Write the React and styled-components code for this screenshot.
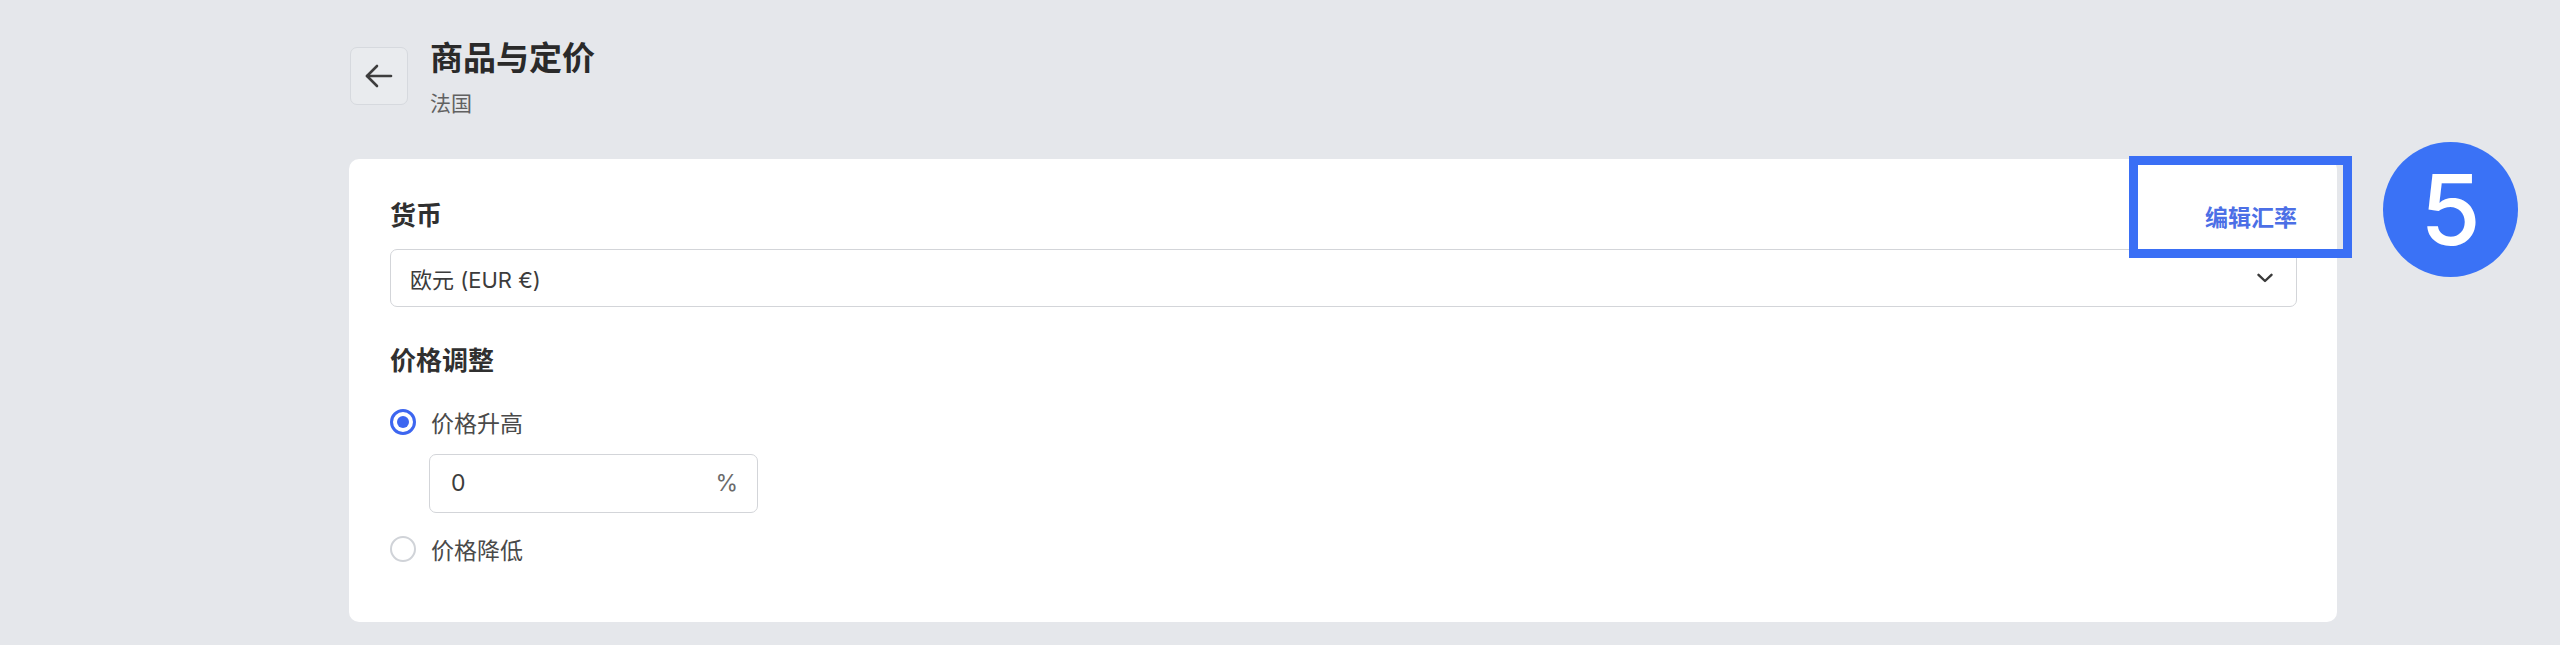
import React from 'react';
import styled, { createGlobalStyle } from 'styled-components';

const GlobalStyle = createGlobalStyle`
  html, body {
    margin: 0;
    padding: 0;
    background: #e5e7eb;
  }
  body {
    font-family: "Inter", "Noto Sans CJK SC", sans-serif;
    color: #303030;
  }
`;

const Page = styled.div`
  width: 2560px;
  height: 645px;
  box-sizing: border-box;
  padding: 38px 0 0 349px;
  background: #e5e7eb;
`;

const Header = styled.div`
  display: flex;
  align-items: flex-start;
  gap: 22px;
  margin-left: 1px;
`;

const BackButton = styled.button`
  display: flex;
  align-items: center;
  justify-content: center;
  width: 58px;
  height: 58px;
  margin-top: 9px;
  padding: 0;
  border: 1px solid #d6d9de;
  border-radius: 7px;
  background: #e9ebee;
  color: #3d3d3d;
`;

const TitleBlock = styled.div`
  display: flex;
  flex-direction: column;
  gap: 11px;
`;

const Title = styled.h1`
  margin: 0;
  font-size: 33px;
  line-height: 40px;
  font-weight: 700;
  color: #2a2a2a;
`;

const Subtitle = styled.div`
  font-size: 21px;
  line-height: 30px;
  color: #616161;
`;

const Card = styled.section`
  position: relative;
  width: 1988px;
  box-sizing: border-box;
  margin-top: 40px;
  padding: 39px 40px 56px 41px;
  background: #ffffff;
  border-radius: 10px;
  display: flex;
  flex-direction: column;
`;

const LabelRow = styled.div`
  display: flex;
  align-items: center;
  justify-content: space-between;
  height: 36px;
`;

const Label = styled.div`
  font-size: 26px;
  line-height: 36px;
  font-weight: 600;
  color: #303030;
  margin-top: ${p => p.$top || 0}px;
`;

const Link = styled.a`
  font-size: 23px;
  font-weight: 600;
  color: #4c6fe6;
  text-decoration: none;
`;

const Select = styled.div`
  display: flex;
  align-items: center;
  justify-content: space-between;
  height: 58px;
  box-sizing: border-box;
  margin-top: 15px;
  padding: 0 23px 0 19px;
  border: 1px solid #d3d5d9;
  border-radius: 7px;
  font-size: 22px;
  color: #3c3c3c;
`;

const RadioRow = styled.label`
  display: flex;
  align-items: center;
  gap: 15px;
  height: 34px;
  margin-top: ${p => p.$top}px;
  font-size: 23px;
  color: #4a4a4a;
`;

const RadioDot = styled.span`
  width: 26px;
  height: 26px;
  box-sizing: border-box;
  border-radius: 50%;
  border: ${p => (p.$checked ? '3px solid #3d66f0' : '2px solid #d0d3d8')};
  display: flex;
  align-items: center;
  justify-content: center;
  &::after {
    content: '';
    display: ${p => (p.$checked ? 'block' : 'none')};
    width: 12px;
    height: 12px;
    border-radius: 50%;
    background: #3d66f0;
  }
`;

const PercentInput = styled.div`
  display: flex;
  align-items: center;
  justify-content: space-between;
  width: 329px;
  height: 59px;
  box-sizing: border-box;
  margin: 15px 0 0 39px;
  padding: 0 19px 2px 21px;
  border: 1px solid #d3d5d9;
  border-radius: 7px;
  font-size: 23px;
  color: #3c3c3c;
`;

const Unit = styled.span`
  color: #6b6b6b;
`;

const Highlight = styled.div`
  position: absolute;
  left: 1780px;
  top: -3px;
  width: 223px;
  height: 102px;
  box-sizing: border-box;
  border: 9px solid #3a6ff5;
`;

const StepBadge = styled.div`
  position: absolute;
  left: 2034px;
  top: -17px;
  width: 135px;
  height: 135px;
  border-radius: 50%;
  background: #3a72f6;
  color: #ffffff;
  display: flex;
  align-items: center;
  justify-content: center;
  font-family: "Inter", sans-serif;
  font-size: 98px;
  font-weight: 500;
  line-height: 1;
`;

const ArrowLeft = () => (
  <svg width="30" height="24" viewBox="0 0 30 24" fill="none" stroke="currentColor" strokeWidth="2.6" strokeLinecap="round" strokeLinejoin="round">
    <path d="M27 12H3" />
    <path d="M13 2L3 12l10 10" />
  </svg>
);

const Chevron = () => (
  <svg width="16" height="10" viewBox="0 0 16 10" fill="none" stroke="#3a3a3a" strokeWidth="2.4" strokeLinecap="round" strokeLinejoin="round">
    <path d="M1.5 1.8L8 8l6.5-6.2" />
  </svg>
);

export default function App() {
  return (
    <Page>
      <GlobalStyle />
      <Header>
        <BackButton aria-label="返回">
          <ArrowLeft />
        </BackButton>
        <TitleBlock>
          <Title>商品与定价</Title>
          <Subtitle>法国</Subtitle>
        </TitleBlock>
      </Header>

      <Card>
        <LabelRow>
          <Label>货币</Label>
          <Link href="#">编辑汇率</Link>
        </LabelRow>
        <Select>
          <span>欧元 (EUR €)</span>
          <Chevron />
        </Select>

        <Label $top={36}>价格调整</Label>
        <RadioRow $top={26}>
          <RadioDot $checked />
          价格升高
        </RadioRow>
        <PercentInput>
          <span>0</span>
          <Unit>%</Unit>
        </PercentInput>
        <RadioRow $top={19}>
          <RadioDot />
          价格降低
        </RadioRow>

        <Highlight />
        <StepBadge>5</StepBadge>
      </Card>
    </Page>
  );
}
